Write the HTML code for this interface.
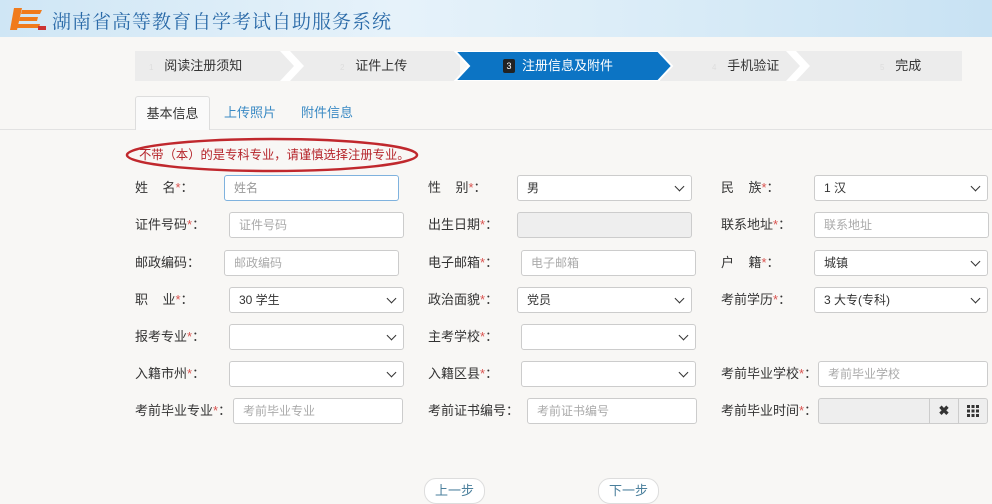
<!DOCTYPE html><html><head><meta charset="utf-8"><style>
*{box-sizing:border-box;margin:0;padding:0}
body{width:992px;height:500px;overflow:hidden;background:#f8f7f5;font-family:"Liberation Sans","Noto Sans CJK SC",sans-serif;font-size:13px;color:#333;position:relative}
.a{position:absolute}
.hdr{left:0;top:0;width:992px;height:37px;background:linear-gradient(90deg,#cfe6f5,#e6f2fa 40%,#d8ebf7 70%,#c8e2f3)}
.title{left:52px;top:7px;font-family:"Noto Serif CJK SC",serif;font-size:19px;color:#2a6aa8;letter-spacing:1px}
.step{top:51px;height:30px;background:#ececec;color:#333;font-size:13px;line-height:30px}
.lb{font-size:13px;color:#333;line-height:25px}
.lb i{color:#d9534f;font-style:normal}
.in{height:26px;border:1px solid #ccc;border-radius:3px;background:#fff;font-size:12px;color:#aaa;line-height:24px;padding-left:9px}
.sel{color:#333}
.sel:after{content:"";position:absolute;right:8px;top:7px;width:6px;height:6px;border-right:1.6px solid #333;border-bottom:1.6px solid #333;transform:rotate(45deg)}
.btn{height:26px;border:1px solid #ddd;border-radius:12px;background:#fff;color:#4a7f9c;font-size:13px;text-align:center;line-height:24px}
</style></head><body>
<div class="a hdr"></div>
<svg class="a" style="left:8px;top:6px" width="40" height="26" viewBox="0 0 40 26"><path d="M6 2h8l-5 22H2z" fill="#f07b1c"/><path d="M14 4h20l-2 4H13zM12 11h18l-1 4H11zM10 18h22l-1 4H9z" fill="#f07b1c"/><rect x="30" y="20" width="8" height="4" fill="#c33"/></svg>
<div class="a title">湖南省高等教育自学考试自助服务系统</div>

<div class="a step" style="left:135px;width:160px;padding-left:14px"><span style="color:#ddd;font-size:8px">1</span>&nbsp;&nbsp;&nbsp;阅读注册须知</div>
<div class="a step" style="left:295px;width:165px;padding-left:45px"><span style="color:#ddd;font-size:8px">2</span>&nbsp;&nbsp;&nbsp;证件上传</div>
<svg class="a" style="left:280px;top:51px" width="28" height="30"><path d="M0 0h10l14 15-14 15H0l14-15z" fill="#fff"/></svg>
<div class="a step" style="left:802px;width:160px;padding-left:78px"><span style="color:#ddd;font-size:8px">5</span>&nbsp;&nbsp;&nbsp;完成</div>
<div class="a step" style="left:660px;width:150px;padding-left:52px"><span style="color:#ddd;font-size:8px">4</span>&nbsp;&nbsp;&nbsp;手机验证</div>
<svg class="a" style="left:786px;top:51px" width="28" height="30"><path d="M0 0h10l14 15-14 15H0l14-15z" fill="#fff"/></svg>
<svg class="a" style="left:452px;top:51px" width="222" height="30"><path d="M3 0h203l14 15-14 15H3l14-15z" fill="#0c74c4" stroke="#fff" stroke-width="2"/></svg>
<div class="a" style="left:503px;top:59px;width:12px;height:14px;background:#222;color:#fff;font-size:9px;text-align:center;line-height:14px;border-radius:2px">3</div>
<div class="a" style="left:522px;top:51px;line-height:30px;color:#fff;font-size:13px">注册信息及附件</div>

<div class="a" style="left:0;top:129px;width:992px;height:1px;background:#e2e2e2"></div>
<div class="a" style="left:135px;top:96px;width:75px;height:34px;background:#fafafa;border:1px solid #ddd;border-bottom:none;border-radius:3px 3px 0 0;text-align:center;line-height:33px">基本信息</div>
<div class="a" style="left:224px;top:96px;line-height:34px;color:#3a8ac4">上传照片</div>
<div class="a" style="left:301px;top:96px;line-height:34px;color:#3a8ac4">附件信息</div>

<div class="a" style="left:139px;top:146px;color:#b5242a;font-size:12.3px;line-height:18px;white-space:nowrap">不带（本）的是专科专业，请谨慎选择注册专业。</div>
<svg class="a" style="left:124px;top:136px" width="300" height="40"><ellipse cx="148" cy="19" rx="145" ry="16" fill="none" stroke="#c0282d" stroke-width="2.5"/></svg>

<div class="a lb" style="left:135px;top:175px">姓&nbsp;&nbsp;&nbsp;&nbsp;名<i>*</i>：</div>
<div class="a in" style="left:224px;top:175px;width:175px;border-color:#7fb2de;color:#999">姓名</div>
<div class="a lb" style="left:428px;top:175px">性&nbsp;&nbsp;&nbsp;&nbsp;别<i>*</i>：</div>
<div class="a in sel" style="left:517px;top:175px;width:175px">男</div>
<div class="a lb" style="left:721px;top:175px">民&nbsp;&nbsp;&nbsp;&nbsp;族<i>*</i>：</div>
<div class="a in sel" style="left:814px;top:175px;width:174px">1 汉</div>

<div class="a lb" style="left:135px;top:212px">证件号码<i>*</i>：</div>
<div class="a in" style="left:229px;top:212px;width:175px">证件号码</div>
<div class="a lb" style="left:428px;top:212px">出生日期<i>*</i>：</div>
<div class="a in" style="left:517px;top:212px;width:175px;background:#eee"></div>
<div class="a lb" style="left:721px;top:212px">联系地址<i>*</i>：</div>
<div class="a in" style="left:814px;top:212px;width:175px">联系地址</div>

<div class="a lb" style="left:135px;top:250px">邮政编码：</div>
<div class="a in" style="left:224px;top:250px;width:175px">邮政编码</div>
<div class="a lb" style="left:428px;top:250px">电子邮箱<i>*</i>：</div>
<div class="a in" style="left:521px;top:250px;width:175px">电子邮箱</div>
<div class="a lb" style="left:721px;top:250px">户&nbsp;&nbsp;&nbsp;&nbsp;籍<i>*</i>：</div>
<div class="a in sel" style="left:814px;top:250px;width:174px">城镇</div>

<div class="a lb" style="left:135px;top:287px">职&nbsp;&nbsp;&nbsp;&nbsp;业<i>*</i>：</div>
<div class="a in sel" style="left:229px;top:287px;width:175px">30 学生</div>
<div class="a lb" style="left:428px;top:287px">政治面貌<i>*</i>：</div>
<div class="a in sel" style="left:517px;top:287px;width:175px">党员</div>
<div class="a lb" style="left:721px;top:287px">考前学历<i>*</i>：</div>
<div class="a in sel" style="left:814px;top:287px;width:174px">3 大专(专科)</div>

<div class="a lb" style="left:135px;top:324px">报考专业<i>*</i>：</div>
<div class="a in sel" style="left:229px;top:324px;width:175px"></div>
<div class="a lb" style="left:428px;top:324px">主考学校<i>*</i>：</div>
<div class="a in sel" style="left:521px;top:324px;width:175px"></div>

<div class="a lb" style="left:135px;top:361px">入籍市州<i>*</i>：</div>
<div class="a in sel" style="left:229px;top:361px;width:175px"></div>
<div class="a lb" style="left:428px;top:361px">入籍区县<i>*</i>：</div>
<div class="a in sel" style="left:521px;top:361px;width:175px"></div>
<div class="a lb" style="left:721px;top:361px">考前毕业学校<i>*</i>：</div>
<div class="a in" style="left:818px;top:361px;width:170px">考前毕业学校</div>

<div class="a lb" style="left:135px;top:398px">考前毕业专业<i>*</i>：</div>
<div class="a in" style="left:233px;top:398px;width:170px">考前毕业专业</div>
<div class="a lb" style="left:428px;top:398px">考前证书编号：</div>
<div class="a in" style="left:527px;top:398px;width:170px">考前证书编号</div>
<div class="a lb" style="left:721px;top:398px">考前毕业时间<i>*</i>：</div>
<div class="a in" style="left:818px;top:398px;width:170px;background:#eee;padding:0"></div>
<div class="a" style="left:929px;top:399px;width:1px;height:24px;background:#ccc"></div>
<div class="a" style="left:958px;top:399px;width:1px;height:24px;background:#ccc"></div>
<div class="a" style="left:930px;top:399px;width:28px;line-height:24px;text-align:center;font-size:13px;font-weight:bold;color:#333">✖</div>
<svg class="a" style="left:967px;top:405px" width="12" height="12"><g fill="#333"><rect x="0" y="0" width="3" height="3"/><rect x="4.5" y="0" width="3" height="3"/><rect x="9" y="0" width="3" height="3"/><rect x="0" y="4.5" width="3" height="3"/><rect x="4.5" y="4.5" width="3" height="3"/><rect x="9" y="4.5" width="3" height="3"/><rect x="0" y="9" width="3" height="3"/><rect x="4.5" y="9" width="3" height="3"/><rect x="9" y="9" width="3" height="3"/></g></svg>

<div class="a btn" style="left:424px;top:478px;width:61px">上一步</div>
<div class="a btn" style="left:598px;top:478px;width:61px">下一步</div>
</body></html>
